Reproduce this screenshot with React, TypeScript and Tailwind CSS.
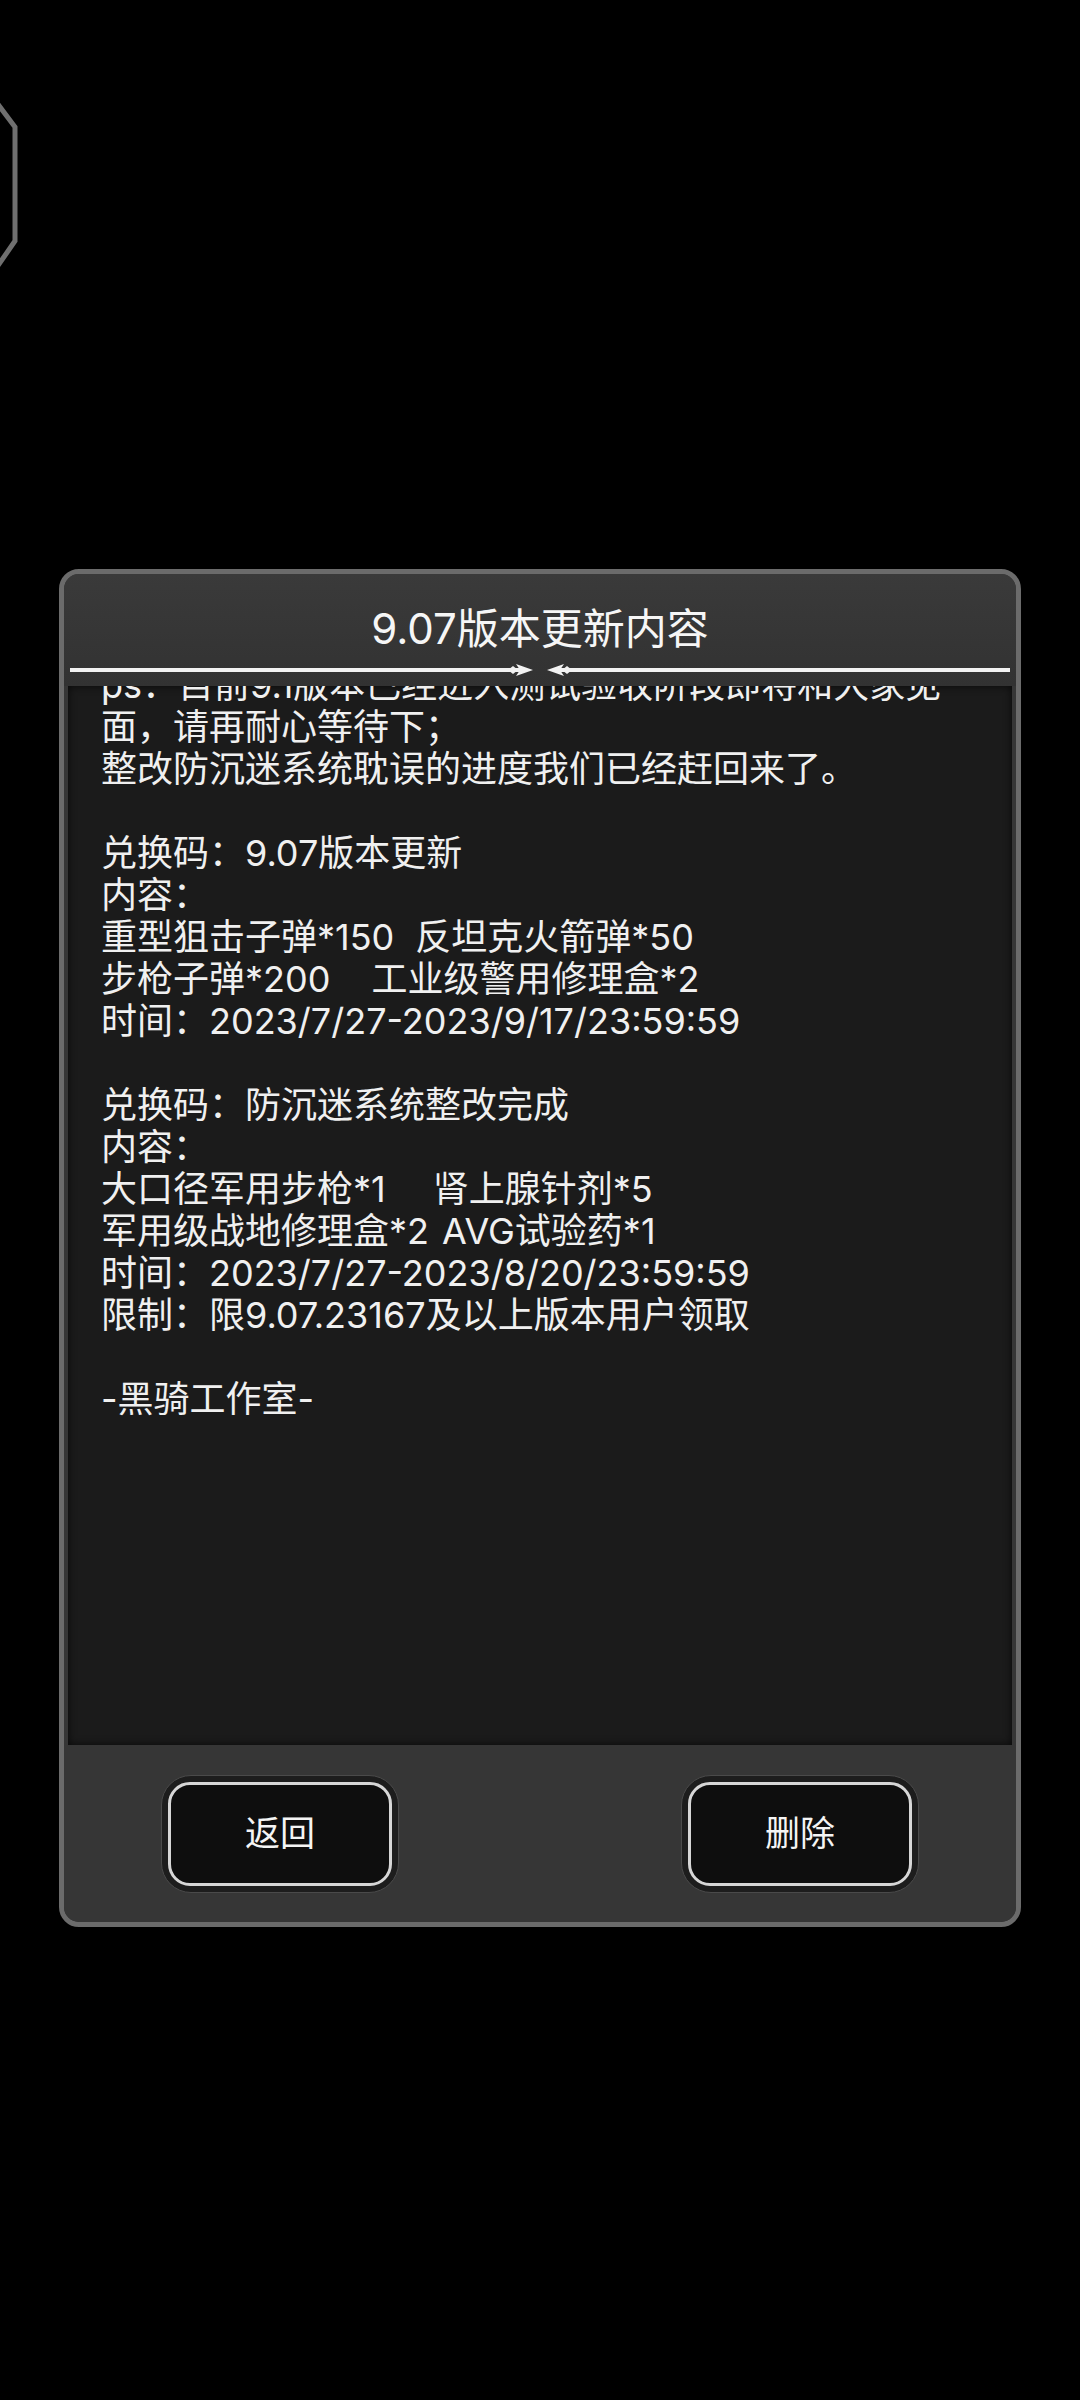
import React from "react";

const Gap = ({ w }: { w: string }) => <span className={`inline-block ${w}`} />;

function Separator() {
  return (
    <svg width="940" height="14" viewBox="0 0 940 14" className="block">
      <line x1="0" y1="7" x2="450" y2="7" stroke="#f2f2f2" strokeWidth="4" />
      <polygon points="438,7 443,3 448,7 443,11" fill="#f2f2f2" />
      <polygon points="446,1 463,7 446,13 450,7" fill="#f2f2f2" />
      <line x1="490" y1="7" x2="940" y2="7" stroke="#f2f2f2" strokeWidth="4" />
      <polygon points="502,7 497,3 492,7 497,11" fill="#f2f2f2" />
      <polygon points="494,1 477,7 494,13 490,7" fill="#f2f2f2" />
    </svg>
  );
}

function GameButton({ label }: { label: string }) {
  return (
    <div className="w-[238px] h-[118px] rounded-[30px] bg-[#1d1d1d] border border-[#4a4a4a] p-[6px]">
      <div className="w-full h-full rounded-[22px] border-[3px] border-[#d6d6d6] bg-[#0e0e0e] flex items-center justify-center text-[35px] leading-none text-[#f4f4f4]">
        {label}
      </div>
    </div>
  );
}

export default function App() {
  return (
    <div className="relative w-[1080px] h-[2400px] bg-black overflow-hidden font-[family-name:Inter,'Noto_Sans_CJK_SC',sans-serif]">
      <svg className="absolute left-0 top-[100px]" width="24" height="175" viewBox="0 0 24 175">
        <path d="M -3 3 L 15 27 L 15 141 L -3 167" fill="none" stroke="#6f6f6f" strokeWidth="5" />
      </svg>

      <div className="pt-[569px]">
        <div className="mx-auto w-[962px] h-[1358px] rounded-[20px] border-[5px] border-[#6b6b6b] bg-[#363636] flex flex-col overflow-hidden">
          <div className="h-[112px] shrink-0 flex flex-col items-center bg-gradient-to-b from-[#3a3a3a] to-[#323232]">
            <div className="pt-[34px] h-[76px] text-[42px] leading-[42px] text-[#f6f6f6]">9.07版本更新内容</div>
            <div className="mt-[13px]">
              <Separator />
            </div>
          </div>

          <div className="flex-1 mx-[4px] bg-[#1b1b1b] overflow-hidden shadow-[inset_0_0_8px_rgba(0,0,0,0.7)]">
            <div className="-mt-[22px] pl-[33px] text-[36px] leading-[42px] text-[#f0f0f0] whitespace-pre">
              <div>ps：目前9.1版本已经进入测试验收阶段即将和大家见</div>
              <div>面，请再耐心等待下；</div>
              <div>整改防沉迷系统耽误的进度我们已经赶回来了。</div>
              <div className="h-[42px]" />
              <div>兑换码：9.07版本更新</div>
              <div>内容：</div>
              <div>
                重型狙击子弹*150
                <Gap w="w-[21px]" />
                反坦克火箭弹*50
              </div>
              <div>
                步枪子弹*200
                <Gap w="w-[41px]" />
                工业级警用修理盒*2
              </div>
              <div>时间：2023/7/27-2023/9/17/23:59:59</div>
              <div className="h-[42px]" />
              <div>兑换码：防沉迷系统整改完成</div>
              <div>内容：</div>
              <div>
                大口径军用步枪*1
                <Gap w="w-[47px]" />
                肾上腺针剂*5
              </div>
              <div>
                军用级战地修理盒*2
                <Gap w="w-[13px]" />
                AVG试验药*1
              </div>
              <div>时间：2023/7/27-2023/8/20/23:59:59</div>
              <div>限制：限9.07.23167及以上版本用户领取</div>
              <div className="h-[42px]" />
              <div>-黑骑工作室-</div>
            </div>
          </div>

          <div className="h-[177px] shrink-0 flex items-center justify-between px-[97px] bg-[#363636]">
            <GameButton label="返回" />
            <GameButton label="删除" />
          </div>
        </div>
      </div>
    </div>
  );
}
